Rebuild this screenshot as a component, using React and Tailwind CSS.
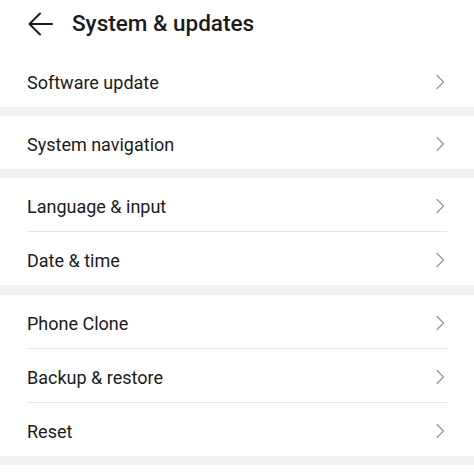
import React from "react";

const Chevron = () => (
  <svg width="10" height="16" viewBox="0 0 10 16" className="shrink-0">
    <path d="M2 1.5 L8.5 8 L2 14.5" fill="none" stroke="#9a9a9a" strokeWidth="1.4" strokeLinecap="round" strokeLinejoin="round" />
  </svg>
);

const Row = ({ label, divider }) => (
  <div className="flex flex-col">
    {divider && <div className="mx-[27px] h-px bg-[#e6e6e6]" />}
    <div className="flex h-[53px] items-center justify-between pl-[27px] pr-[29px] pt-[3px]">
      <span className="text-[18px] text-[#1b1b1b]">{label}</span>
      <Chevron />
    </div>
  </div>
);

const Gap = ({ h = "h-[9px]" }) => <div className={`${h} bg-[#f2f2f2]`} />;

export default function App() {
  return (
    <div className="flex h-[474px] w-[474px] flex-col overflow-hidden bg-white" style={{ fontFamily: "Roboto, 'Noto Sans', sans-serif" }}>
      <div className="flex h-[47px] items-center pl-[28px] pt-[1px]">
        <svg width="26" height="24" viewBox="0 0 26 24" className="shrink-0">
          <path d="M24 12 H2 M12 1.5 L1.5 12 L12 22.5" fill="none" stroke="#1b1b1b" strokeWidth="2" strokeLinecap="round" strokeLinejoin="round" />
        </svg>
        <span className="ml-[18px] text-[22.5px] font-medium text-[#1b1b1b]">System &amp; updates</span>
      </div>
      <div className="h-[7px]" />
      <Row label="Software update" />
      <Gap />
      <Row label="System navigation" />
      <Gap />
      <Row label="Language & input" />
      <Row label="Date & time" divider />
      <Gap h="h-[10px]" />
      <Row label="Phone Clone" />
      <Row label="Backup & restore" divider />
      <Row label="Reset" divider />
      <Gap />
    </div>
  );
}
